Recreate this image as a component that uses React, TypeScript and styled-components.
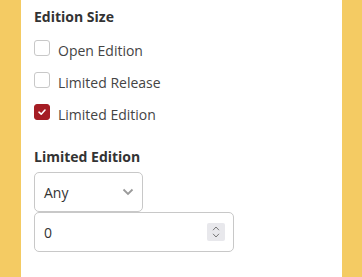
import React from 'react';
import styled, { createGlobalStyle } from 'styled-components';

const GlobalStyle = createGlobalStyle`
  html, body {
    margin: 0;
    padding: 0;
    background: #f4cb63;
  }
  body {
    font-family: 'Open Sans', 'Liberation Sans', sans-serif;
  }
`;

const Page = styled.div`
  display: flex;
  width: 362px;
  height: 277px;
  background: #f4cb63;
`;

const Panel = styled.div`
  width: 321px;
  margin-left: 21px;
  background: #fff;
  padding: 7px 13px 0;
  box-sizing: border-box;
`;

const Heading = styled.div<{ gap?: string }>`
  font-size: 14px;
  line-height: 20px;
  font-weight: 700;
  color: #333;
  margin-top: ${({ gap }) => gap || '0'};
`;

const OptionList = styled.ul`
  list-style: none;
  margin: 7px 0 0;
  padding: 0;
`;

const Option = styled.li`
  display: flex;
  align-items: center;
  height: 32px;
  font-size: 14px;
  color: #444;
  cursor: pointer;
`;

const Box = styled.span<{ checked: boolean }>`
  display: inline-flex;
  align-items: center;
  justify-content: center;
  width: 16px;
  height: 16px;
  box-sizing: border-box;
  border-radius: 3px;
  margin: -4px 8px 0 0;
  border: 1px solid ${({ checked }) => (checked ? '#a51d24' : '#c8c8c8')};
  background: ${({ checked }) => (checked ? '#a51d24' : '#fff')};
`;

const Field = styled.div<{ width: string }>`
  display: flex;
  align-items: center;
  justify-content: space-between;
  width: ${({ width }) => width};
  height: 40px;
  box-sizing: border-box;
  border: 1px solid #c8c8c8;
  border-radius: 5px;
  padding: 0 8px 0 9px;
  font-size: 14px;
  color: #333;
  background: #fff;
`;

const Controls = styled.div`
  margin-top: 5px;
`;

const Spinner = styled.span`
  display: inline-flex;
  flex-direction: column;
  align-items: center;
  justify-content: center;
  width: 18px;
  height: 18px;
  background: #e8e8ec;
  border-radius: 2px;
  gap: 2px;
`;

const Check = () => (
  <svg width="10" height="10" viewBox="0 0 10 10">
    <path d="M2 5.2 L4.2 7.2 L8 3" fill="none" stroke="#fff" strokeWidth="1.6" strokeLinecap="round" strokeLinejoin="round" />
  </svg>
);

const options = [
  { label: 'Open Edition', checked: false },
  { label: 'Limited Release', checked: false },
  { label: 'Limited Edition', checked: true },
];

export default function App() {
  return (
    <Page>
      <GlobalStyle />
      <Panel>
        <Heading>Edition Size</Heading>
        <OptionList>
          {options.map((o) => (
            <Option key={o.label}>
              <Box checked={o.checked}>{o.checked && <Check />}</Box>
              {o.label}
            </Option>
          ))}
        </OptionList>
        <Heading gap="17px">Limited Edition</Heading>
        <Controls>
          <Field width="109px">
            Any
            <svg width="12" height="8" viewBox="0 0 12 8">
              <path d="M1.5 1.5 L6 6 L10.5 1.5" fill="none" stroke="#9a9a9a" strokeWidth="1.8" />
            </svg>
          </Field>
          <Field width="200px">
            0
            <Spinner>
              <svg width="8" height="5" viewBox="0 0 8 5">
                <path d="M1 4.2 L4 1 L7 4.2" fill="none" stroke="#777" strokeWidth="1" />
              </svg>
              <svg width="8" height="5" viewBox="0 0 8 5">
                <path d="M1 0.8 L4 4 L7 0.8" fill="none" stroke="#777" strokeWidth="1" />
              </svg>
            </Spinner>
          </Field>
        </Controls>
      </Panel>
    </Page>
  );
}
